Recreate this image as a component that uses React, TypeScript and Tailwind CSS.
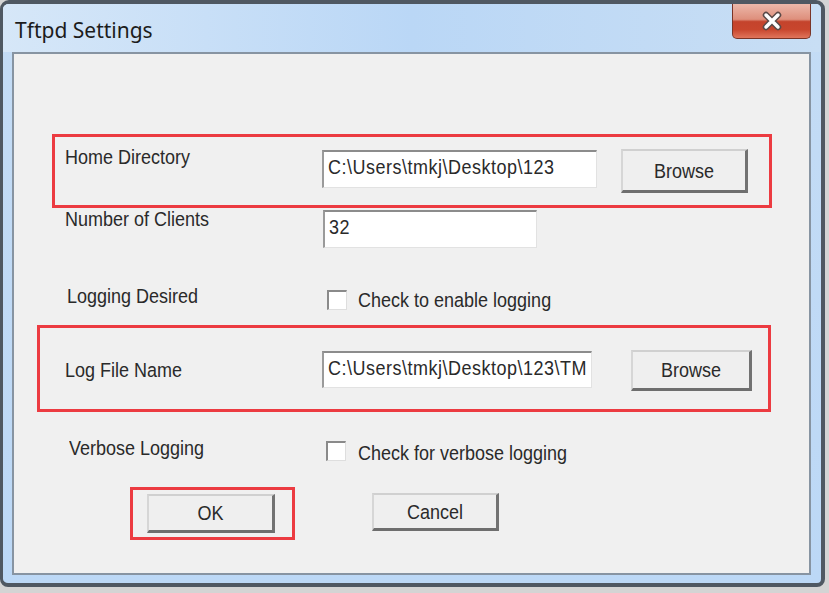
import React from "react";

const body = "font-['Liberation_Sans',Arial,sans-serif] text-[18px] leading-[20px] text-[#2a2a2a]";

function T({ children, className = "" }: { children: React.ReactNode; className?: string }) {
  return <span className={`inline-block scale-y-[1.14] ${className}`}>{children}</span>;
}

function TextBox({ className, value }: { className: string; value: string }) {
  return (
    <div
      className={`bg-white border-t-2 border-l-2 border-t-[#8c8c8c] border-l-[#9a9a9a] border-r border-b border-r-[#e2e2e2] border-b-[#e2e2e2] pl-[4px] pt-[5px] overflow-hidden whitespace-nowrap tracking-[0.5px] ${className}`}
    >
      <T>{value}</T>
    </div>
  );
}

function Btn({ className, children }: { className: string; children: React.ReactNode }) {
  return (
    <div
      className={`bg-[#efefef] flex items-center justify-center border-t-2 border-l-2 border-t-[#d0d0d0] border-l-[#d6d6d6] border-r-[3px] border-b-[3px] border-r-[#727272] border-b-[#6e6e6e] ${className}`}
    >
      <T>{children}</T>
    </div>
  );
}

function Check({ className }: { className: string }) {
  return (
    <div
      className={`w-[20px] h-[20px] bg-white border-t-2 border-l-2 border-t-[#8a8a8a] border-l-[#8a8a8a] border-r border-b border-r-[#dedede] border-b-[#dedede] shrink-0 ${className}`}
    />
  );
}

export default function App() {
  return (
    <div className="w-[829px] h-[593px] bg-[#d4d4d4] overflow-hidden">
      <div className="w-[825px] h-[587px] rounded-t-[9px] rounded-b-[8px] border-t-[4px] border-l-[3px] border-r-[4px] border-b-[4px] border-[#4f5862] bg-gradient-to-b from-[#c4dcf5] to-[#bcd8f6] flex flex-col overflow-hidden">
        <div className="h-[48px] shrink-0 flex justify-between items-start pl-[12px] pr-[10px] bg-gradient-to-r from-[#d6e7f8] via-[#bad7f6] to-[#c8def4]">
          <div className="mt-[13px] text-[21px] leading-[26px] text-[#1c1c1c] font-['Noto_Sans','Open_Sans',sans-serif]">
            Tftpd Settings
          </div>
          <div className="w-[79px] h-[35px] rounded-b-[5px] border border-t-0 border-[#7a3527] bg-[linear-gradient(to_bottom,#ecb8aa_0%,#de8f7c_45%,#c4432c_52%,#c8462d_75%,#e0755b_100%)] flex items-center justify-center">
            <svg width="24" height="20" viewBox="0 0 24 20">
              <path d="M6 4 L18 16 M18 4 L6 16" stroke="#5a4a48" strokeWidth="6.5" strokeLinecap="round" />
              <path d="M6 4 L18 16 M18 4 L6 16" stroke="#ffffff" strokeWidth="3.5" strokeLinecap="round" />
            </svg>
          </div>
        </div>
        <div className={`ml-[9px] w-[799px] h-[523px] shrink-0 border-2 border-[#8794a2] bg-[#f0f0f0] flex flex-col ${body}`}>
          <div className="mt-[80px] ml-[38px] w-[720px] h-[74px] border-[3px] border-[#ec3b41] flex items-start">
            <div className="ml-[10px] w-[257px] mt-[10px] shrink-0"><T>Home Directory</T></div>
            <TextBox className="mt-[13px] w-[275px] h-[38px] shrink-0" value="C:\Users\tmkj\Desktop\123" />
            <Btn className="ml-[24px] mt-[12px] w-[127px] h-[44px] shrink-0">Browse</Btn>
          </div>

          <div className="mt-[1px] ml-[51px] flex items-start">
            <div className="w-[258px] shrink-0"><T>Number of Clients</T></div>
            <TextBox className="mt-[1px] w-[214px] h-[38px] shrink-0" value="32" />
          </div>

          <div className="mt-[38px] ml-[53px] flex items-start">
            <div className="w-[260px] shrink-0"><T>Logging Desired</T></div>
            <Check className="mt-[4px]" />
            <div className="ml-[11px] mt-[4px]"><T>Check to enable logging</T></div>
          </div>

          <div className="mt-[15px] ml-[23px] w-[734px] h-[87px] border-[3px] border-[#ec3b41] flex items-start">
            <div className="ml-[25px] w-[257px] mt-[32px] shrink-0"><T>Log File Name</T></div>
            <TextBox className="mt-[23px] w-[270px] h-[37px] shrink-0" value="C:\Users\tmkj\Desktop\123\TM" />
            <Btn className="ml-[39px] mt-[22px] w-[121px] h-[41px] shrink-0">Browse</Btn>
          </div>

          <div className="mt-[26px] ml-[55px] flex items-start">
            <div className="w-[257px] shrink-0"><T>Verbose Logging</T></div>
            <Check className="mt-[3px]" />
            <div className="ml-[12px] mt-[5px]"><T>Check for verbose logging</T></div>
          </div>

          <div className="mt-[24px] ml-[116px] flex items-start">
            <div className="w-[165px] h-[53px] border-[3px] border-[#ec3b41] shrink-0">
              <Btn className="ml-[14px] mt-[4px] w-[128px] h-[39px]">OK</Btn>
            </div>
            <Btn className="ml-[77px] mt-[6px] w-[127px] h-[38px] shrink-0">Cancel</Btn>
          </div>
        </div>
      </div>
    </div>
  );
}
